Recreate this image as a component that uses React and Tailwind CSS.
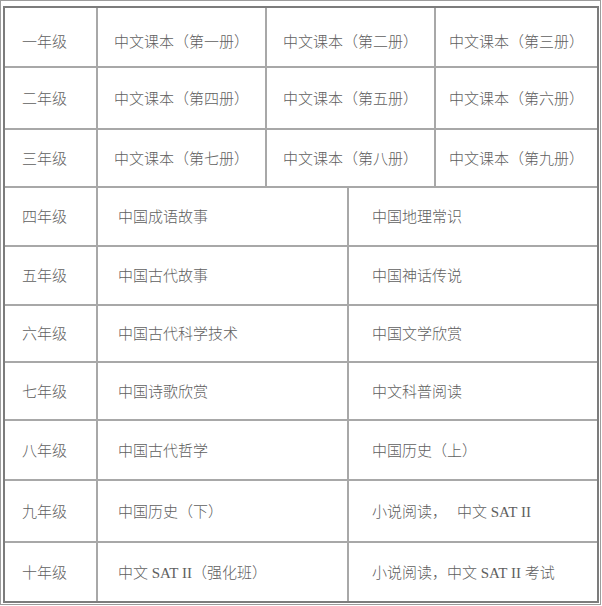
import React from "react";

const font = { fontFamily: '"Liberation Serif", "Noto Sans CJK SC", serif' };

const topRows = [
  { h: "h-[60px]", pt: "pt-[10px]", g: "一年级", c: ["中文课本（第一册）", "中文课本（第二册）", "中文课本（第三册）"] },
  { h: "h-[62px]", pt: "pt-[3px]", g: "二年级", c: ["中文课本（第四册）", "中文课本（第五册）", "中文课本（第六册）"] },
  { h: "h-[58px]", pt: "pt-[3px]", g: "三年级", c: ["中文课本（第七册）", "中文课本（第八册）", "中文课本（第九册）"] },
];

const bottomRows = [
  { h: "h-[59px]", g: "四年级", a: "中国成语故事", b: "中国地理常识" },
  { h: "h-[59px]", g: "五年级", a: "中国古代故事", b: "中国神话传说" },
  { h: "h-[57px]", g: "六年级", a: "中国古代科学技术", b: "中国文学欣赏" },
  { h: "h-[58px]", g: "七年级", a: "中国诗歌欣赏", b: "中文科普阅读" },
  { h: "h-[60px]", g: "八年级", a: "中国古代哲学", b: "中国历史（上）" },
  {
    h: "h-[62px]",
    g: "九年级",
    a: "中国历史（下）",
    b: (
      <>
        小说阅读，<span className="ml-[10px]">中文 SAT II</span>
      </>
    ),
  },
  {
    h: "h-[58px]",
    g: "十年级",
    a: "中文 SAT II（强化班）",
    b: "小说阅读，中文 SAT II 考试",
    last: true,
  },
];

export default function App() {
  return (
    <div className="w-[602px] h-[606px] bg-white" style={font}>
      <div className="w-[601px] h-[605px] border border-[#9c9c9c] pl-[2px] pt-[5px] pr-[1px] pb-[1px]">
        <div className="border-2 border-[#7c7c7c] flex flex-col text-[15px] font-light text-[#606060] leading-none">
          {topRows.map((r, i) => (
            <div key={i} className={`${r.h} flex border-b-2 border-[#a8a8a8]`}>
              <div className={`w-[93px] shrink-0 border-r-2 border-[#a8a8a8] flex items-center pl-[17px] ${r.pt}`}>
                {r.g}
              </div>
              <div className={`w-[169px] shrink-0 border-r-2 border-[#a8a8a8] flex items-center justify-center ${r.pt}`}>
                {r.c[0]}
              </div>
              <div className={`w-[169px] shrink-0 border-r-2 border-[#a8a8a8] flex items-center justify-center ${r.pt}`}>
                {r.c[1]}
              </div>
              <div className={`flex-1 flex items-center justify-center ${r.pt}`}>{r.c[2]}</div>
            </div>
          ))}
          {bottomRows.map((r, i) => (
            <div key={i} className={`${r.h} flex ${r.last ? "" : "border-b-2 border-[#a8a8a8]"}`}>
              <div className="w-[93px] shrink-0 border-r-2 border-[#a8a8a8] flex items-center pl-[17px] pt-[2px]">
                {r.g}
              </div>
              <div className="w-[251px] shrink-0 border-r-2 border-[#a8a8a8] flex items-center pl-[20px] pt-[2px]">
                {r.a}
              </div>
              <div className="flex-1 flex items-center pl-[23px] pt-[2px]">{r.b}</div>
            </div>
          ))}
        </div>
      </div>
    </div>
  );
}
